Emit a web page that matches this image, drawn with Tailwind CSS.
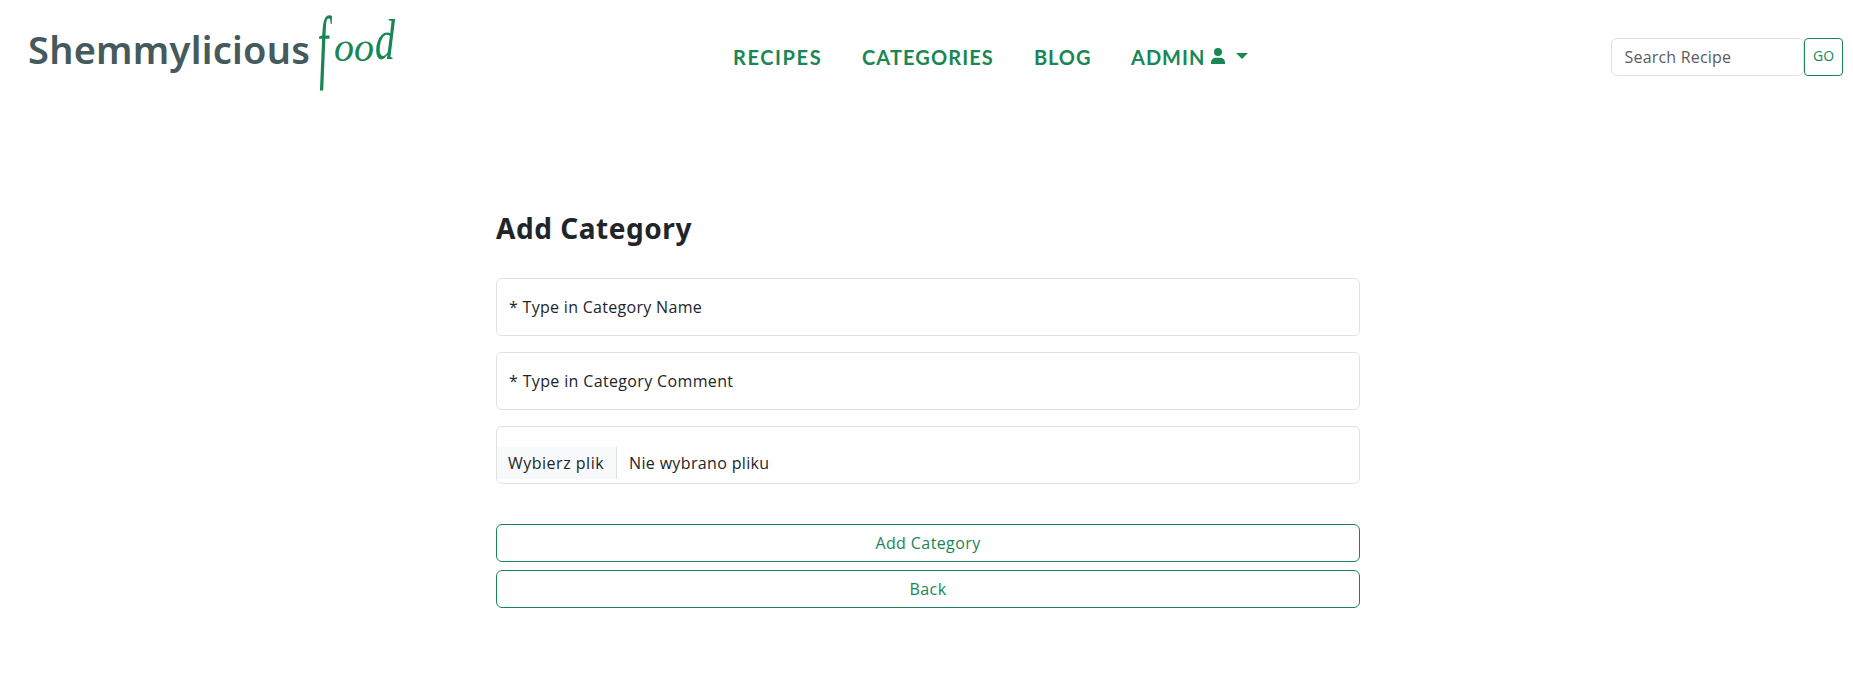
<!DOCTYPE html>
<html lang="en">
<head>
<meta charset="utf-8">
<title>Add Category</title>
<script src="https://cdn.jsdelivr.net/npm/@tailwindcss/browser@4"></script>
</head>
<body class="min-h-screen overflow-hidden bg-white font-['Open_Sans',sans-serif] text-base text-[#212529]">
<header class="flex h-[114px] items-start whitespace-nowrap pr-[10px] pl-[28px]">
  <a class="flex w-[705px] items-start text-[#455a5c]">
    <span class="mt-[20px] w-[284px] font-['Noto_Sans',sans-serif] text-[38px] leading-[58px] font-semibold tracking-[0.250px]">Shemmylicious</span>
    <span class="flex font-['Liberation_Serif',serif] text-[40px] leading-[44px] text-[#198754] italic">
      <span class="mt-[30px] ml-[6px] inline-block w-[16px] origin-[50%_62%] scale-y-[2.05] skew-x-[5deg]">f</span><span class="mt-[26px] inline-block w-[20px]">o</span><span class="mt-[26px] inline-block w-[21px]">o</span><span class="mt-[26px] inline-block origin-[50%_80%] scale-y-[1.45]">d</span>
    </span>
  </a>
  <nav class="mt-[42px] flex font-[Lato,sans-serif] text-[20px] leading-[30px] font-bold tracking-[0.9px] text-[#198754]">
    <a class="w-[129px] tracking-[1.6px]">RECIPES</a>
    <a class="w-[172px] tracking-[1.1px]">CATEGORIES</a>
    <a class="w-[97px]">BLOG</a>
    <a class="flex">
      <span class="w-[80px] tracking-[1px]">ADMIN</span>
      <svg class="mt-[6px] h-4 w-[14px]" viewBox="0 0 14 16" fill="currentColor"><circle cx="7" cy="4" r="4"/><path d="M0 16v-1.500a4.800 4.800 0 0 1 4.800-4.800h4.400a4.800 4.800 0 0 1 4.800 4.800V16z"/></svg>
      <svg class="mt-[11px] ml-[11px] h-[6px] w-3" viewBox="0 0 12 6" fill="currentColor"><path d="M0 0h12L6 6z"/></svg>
    </a>
  </nav>
  <form class="mt-[38px] ml-auto flex">
    <div class="h-[38px] w-[193px] rounded-md border border-[#dee2e6] pl-[12.500px] leading-[36px] tracking-[0.2px] text-[#595c5f]">Search Recipe</div>
    <button type="button" class="h-[38px] w-[39px] rounded border border-[#198754] pb-[2px] text-sm text-[#198754]">GO</button>
  </form>
</header>
<main class="mt-[91px] ml-[496px] w-[864px] whitespace-nowrap">
  <h1 class="h-[73px] font-['Noto_Sans',sans-serif] text-[28px] leading-[46px] font-bold tracking-[0.550px]">Add Category</h1>
  <div class="flex flex-col gap-4">
    <div class="h-[58px] rounded-md border border-[#dee2e6] pl-3 leading-[57px] tracking-[0.300px]">* Type in Category Name</div>
    <div class="h-[58px] rounded-md border border-[#dee2e6] pl-3 leading-[57px] tracking-[0.350px]">* Type in Category Comment</div>
    <div class="flex h-[58px] rounded-md border border-[#dee2e6] pt-5 leading-8 tracking-[0.350px]">
      <span class="h-8 w-[120px] border-r border-[#dee2e6] bg-[#f8f9fa] pl-[11px] tracking-[0.500px]">Wybierz plik</span>
      <span class="pl-3">Nie wybrano pliku</span>
    </div>
  </div>
  <div class="mt-10 flex flex-col gap-2 tracking-[0.4px] text-[#198754]">
    <button type="button" class="h-[38px] rounded-md border border-[#198754]">Add Category</button>
    <button type="button" class="h-[38px] rounded-md border border-[#198754]">Back</button>
  </div>
</main>
</body>
</html>
